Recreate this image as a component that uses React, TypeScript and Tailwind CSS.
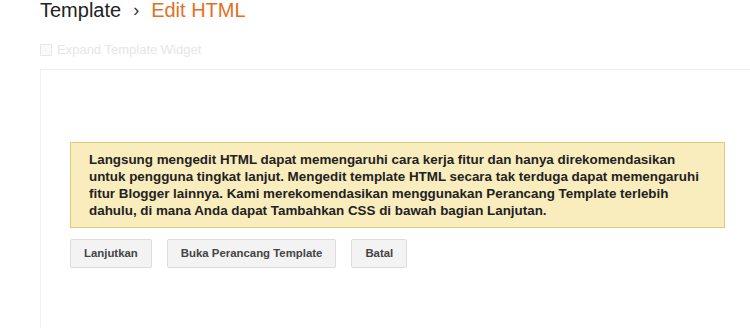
export default function App() {
  const buttons = ["Lanjutkan", "Buka Perancang Template", "Batal"];
  const lines = [
    "Langsung mengedit HTML dapat memengaruhi cara kerja fitur dan hanya direkomendasikan",
    "untuk pengguna tingkat lanjut. Mengedit template HTML secara tak terduga dapat memengaruhi",
    "fitur Blogger lainnya. Kami merekomendasikan menggunakan Perancang Template terlebih",
    "dahulu, di mana Anda dapat Tambahkan CSS di bawah bagian Lanjutan.",
  ];
  return (
    <div className="w-[750px] h-[328px] overflow-hidden bg-white font-['Liberation_Sans',Arial,sans-serif]">
      <div className="pl-[40px]">
        <h1 className="text-[20px] leading-[20px] text-[#222] flex items-center">
          <span>Template</span>
          <span className="mx-[12px] text-[18px] text-[#333]">›</span>
          <span className="text-[#e2701f]">Edit HTML</span>
        </h1>
        <label className="mt-[24px] flex items-center h-[12px] text-[13px] text-[#e6e6e6]">
          <span className="w-[12px] h-[12px] border border-[#e8e8e8] bg-[#fafafa] mr-[5px]" />
          Expand Template Widget
        </label>
        <div className="mt-[13px] h-[300px] border-l border-t border-[#f0f0f0] pl-[29px] pt-[72px]">
          <div className="w-[655px] bg-[#f9edbe] border border-[#e5c97a] pl-[18px] py-[8px] text-[13.4px] leading-[17px] font-bold text-[#222] whitespace-nowrap">
            {lines.map((l) => (
              <div key={l}>{l}</div>
            ))}
          </div>
          <div className="mt-[11px] flex gap-[15px]">
            {buttons.map((b) => (
              <button
                key={b}
                className="h-[29px] px-[13px] rounded-[2px] border border-[#dcdcdc] bg-[#f3f3f3] text-[11.4px] font-bold text-[#444]"
              >
                {b}
              </button>
            ))}
          </div>
        </div>
      </div>
    </div>
  );
}
